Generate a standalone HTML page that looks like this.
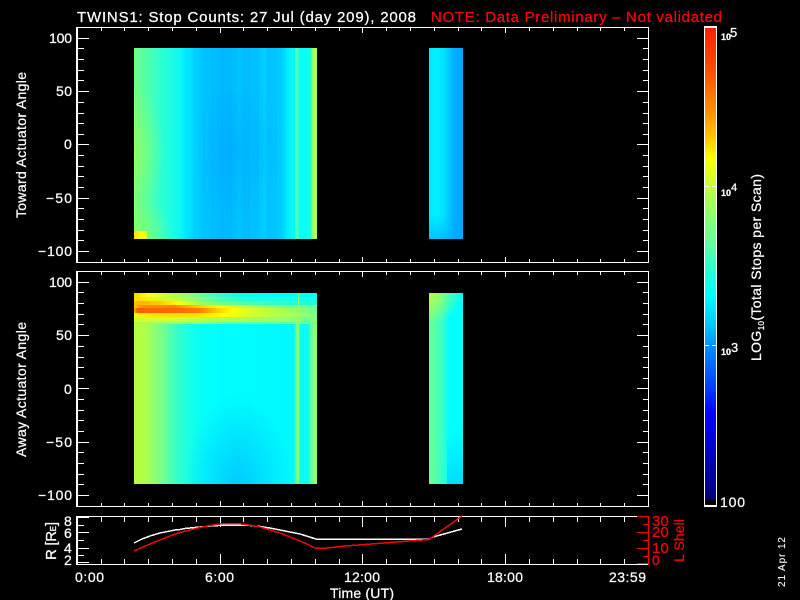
<!DOCTYPE html>
<html><head><meta charset="utf-8"><style>
html,body{margin:0;padding:0;background:#000;width:800px;height:600px;overflow:hidden}
.h{position:absolute}
svg{position:absolute;left:0;top:0}
text{font-family:"Liberation Sans",sans-serif;fill:#fff;stroke:#fff;stroke-width:.25;font-size:14px}
.r{fill:#f00;stroke:#f00}
</style></head><body>
<!-- panel 1 main -->
<div class="h" style="left:134px;top:48px;width:183px;height:191px;background:linear-gradient(90deg,#6fff88 0,#5cff9c 8px,#40ffc0 20px,#28ffd8 30px,#10f8f0 45px,#00f0ff 50px,#00d4ff 60px,#00c4ff 70px,#00b8ff 90px,#00bcff 100px,#00c8ff 106px,#00bcff 109px,#00c0ff 120px,#00c8ff 128px,#00d0ff 131px,#00c0ff 135px,#00ccff 148px,#00e8ff 152px,#00ffff 160px,#10fff0 161px,#50ffb0 162px,#50ffb0 164px,#20ffe0 165px,#00ffff 166px,#10ffe8 176px,#70ff90 178px,#b0ff50 180px,#b8ff48 183px)"></div>
<div class="h" style="left:134px;top:48px;width:50px;height:191px;background:radial-gradient(ellipse 30px 70px at 0 105px,rgba(170,255,70,.55),rgba(170,255,70,0))"></div>
<div class="h" style="left:134px;top:195px;width:50px;height:44px;background:radial-gradient(ellipse 40px 44px at 0 100%,rgba(150,255,80,.75),rgba(150,255,80,0))"></div>
<div class="h" style="left:190px;top:90px;width:90px;height:135px;background:radial-gradient(ellipse at 50% 45%,rgba(0,130,255,.2),rgba(0,130,255,0) 70%)"></div>
<div class="h" style="left:185px;top:48px;width:110px;height:191px;background:repeating-linear-gradient(90deg,rgba(0,140,255,.06) 0 2px,rgba(0,255,255,.03) 2px 5px,rgba(0,140,255,0) 5px 9px)"></div>
<div class="h" style="left:134px;top:231px;width:13px;height:8px;background:linear-gradient(90deg,#ffe000,#ffff00 60%,#e8ff20)"></div>
<!-- panel 1 second block -->
<div class="h" style="left:429px;top:48px;width:34px;height:191px;background:linear-gradient(90deg,#00e8ff 0,#00f0ff 8px,#00dcff 16px,#00c8ff 20px,#00b0ff 25px,#00a8ff 34px)"></div>
<div class="h" style="left:429px;top:215px;width:34px;height:24px;background:linear-gradient(180deg,rgba(0,170,255,0),rgba(0,170,255,.6))"></div>
<!-- panel 2 main -->
<div class="h" style="left:134px;top:293px;width:183px;height:191px;background:linear-gradient(90deg,#b0ff48 0,#b4ff44 10px,#90ff70 20px,#70ff90 30px,#40ffc0 40px,#20ffe0 52px,#08fff4 65px,#00ffff 80px,#00f8ff 160px,#50ffb0 162px,#90ff68 163px,#90ff68 164px,#40ffc0 165px,#00ffff 167px,#10f8f0 174px,#60ffa0 177px,#90ff70 180px,#90ff70 183px)"></div>
<div class="h" style="left:185px;top:395px;width:105px;height:89px;background:radial-gradient(ellipse at 50% 100%,rgba(0,170,255,.6),rgba(0,170,255,0) 72%)"></div>
<!-- bands -->
<div class="h" style="left:134px;top:293px;width:183px;height:4px;background:linear-gradient(90deg,#ffd000 0,#ffe000 4px,#ffff20 14px,#c0ff40 36px,#80ff80 60px,#40ffc0 80px,#10ffe8 105px,#00ffff 135px,#00ffff 183px)"></div>
<div class="h" style="left:134px;top:297px;width:183px;height:4px;background:linear-gradient(90deg,#ffe000 0,#ffe800 10px,#d0ff30 36px,#90ff70 62px,#50ffb0 85px,#20ffe0 115px,#10fff0 183px)"></div>
<div class="h" style="left:134px;top:301px;width:183px;height:4px;background:linear-gradient(90deg,#ffc000 0,#ffb000 6px,#ffcc00 26px,#ffff00 46px,#a0ff50 66px,#70ff80 86px,#40ffc0 126px,#20ffd0 160px,#20ffd0 183px)"></div>
<div class="h" style="left:134px;top:305px;width:183px;height:3px;background:linear-gradient(90deg,#ffd000 0,#ff9000 6px,#ff8000 40px,#ffc000 60px,#ffff00 85px,#c0ff40 110px,#80ff80 150px,#60ffa0 183px)"></div>
<div class="h" style="left:134px;top:308px;width:183px;height:5px;background:linear-gradient(90deg,#ffc000 0,#ff6000 3px,#ff6a00 50px,#ff8000 66px,#ffd000 85px,#ffff00 98px,#d0ff30 120px,#a0ff50 150px,#70ff90 183px)"></div>
<div class="h" style="left:134px;top:313px;width:183px;height:4px;background:linear-gradient(90deg,#f0ff10 0,#ffe000 20px,#ffdc00 60px,#ffff00 90px,#c8ff38 125px,#a8ff58 160px,#80ff80 183px)"></div>
<div class="h" style="left:134px;top:317px;width:183px;height:5px;background:linear-gradient(90deg,#d8ff28 0,#d0ff30 40px,#b0ff50 80px,#a0ff60 120px,#90ff70 165px,#60ffa0 172px,#90ff70 183px)"></div>
<div class="h" style="left:134px;top:322px;width:183px;height:2px;background:linear-gradient(90deg,#b0ff48 0,#90ff70 60px,#60ffa0 110px,#70ff90 183px)"></div>
<div class="h" style="left:298px;top:293px;width:1px;height:191px;background:#90ff68"></div>
<!-- panel 2 second block -->
<div class="h" style="left:429px;top:293px;width:34px;height:191px;background:linear-gradient(90deg,#70ff90 0,#50ffb0 8px,#30ffd0 15px,#14fff0 18px,#00ffff 22px,#00ffff 34px)"></div>
<div class="h" style="left:429px;top:293px;width:34px;height:30px;background:radial-gradient(ellipse 34px 30px at 0 0,rgba(190,255,60,.9),rgba(190,255,60,0))"></div>
<div class="h" style="left:447px;top:430px;width:16px;height:54px;background:linear-gradient(180deg,rgba(0,200,255,0),rgba(0,200,255,.6))"></div>
<!-- colorbar -->
<div class="h" style="left:704px;top:26px;width:11px;height:477px;border:1px solid #fff;border-width:2px 1px 2px 1px;background:linear-gradient(180deg,#ff1e00 0,#ff5000 44px,#ff9000 84px,#ffc800 110px,#ffff00 130px,#a8ff50 172px,#60ffa0 215px,#20ffd8 245px,#00ffff 268px,#00c0ff 300px,#0090ff 318px,#0040ff 358px,#0000ff 386px,#000090 460px,#000070 472px,#000 472px,#000 477px)"></div>
<svg width="800" height="600" viewBox="0 0 800 600">
<defs>
<path id="xt" d="M101 0v3M124 0v3M148 0v3M172 0v3M196 0v3M243 0v3M267 0v3M291 0v3M315 0v3M339 0v3M386 0v3M410 0v3M434 0v3M458 0v3M481 0v3M529 0v3M553 0v3M577 0v3M600 0v3M624 0v3M220 0v5M362 0v5M505 0v5" stroke="#fff" fill="none"/>
<path id="xt3" d="M101 0v5M124 0v5M148 0v5M172 0v5M196 0v5M243 0v5M267 0v5M291 0v5M315 0v5M339 0v5M386 0v5M410 0v5M434 0v5M458 0v5M481 0v5M529 0v5M553 0v5M577 0v5M600 0v5M624 0v5M220 0v10M362 0v10M505 0v10" stroke="#fff" fill="none"/>
<path id="yl" d="M78 38.5h11M78 91.5h11M78 144.5h11M78 198.5h11M78 251.5h11M78 48.5h6M78 59.5h6M78 70.5h6M78 80.5h6M78 102.5h6M78 113.5h6M78 123.5h6M78 134.5h6M78 155.5h6M78 166.5h6M78 176.5h6M78 187.5h6M78 208.5h6M78 219.5h6M78 230.5h6M78 240.5h6" stroke="#fff" fill="none"/>
<path id="yr" d="M637 38.5h11M637 91.5h11M637 144.5h11M637 198.5h11M637 251.5h11M643 48.5h5M643 59.5h5M643 70.5h5M643 80.5h5M643 102.5h5M643 113.5h5M643 123.5h5M643 134.5h5M643 155.5h5M643 166.5h5M643 176.5h5M643 187.5h5M643 208.5h5M643 219.5h5M643 230.5h5M643 240.5h5" stroke="#fff" fill="none"/>
</defs>
<g shape-rendering="crispEdges">
<!-- frames -->
<path d="M77 27.5H648.5V262.5H77Z M77 271.5H648.5V506.5H77Z M77 516.5H648.5V564.5H77Z" fill="none" stroke="#fff" stroke-width="1"/>
<rect x="76" y="27" width="2" height="236" fill="#fff"/><rect x="76" y="271" width="2" height="236" fill="#fff"/><rect x="76" y="516" width="2" height="49" fill="#fff"/>
<use href="#xt" transform="translate(0.5,28)"/>
<use href="#xt" transform="translate(0.5,262) scale(1,-1)"/>
<use href="#xt" transform="translate(0.5,272)"/>
<use href="#xt" transform="translate(0.5,506) scale(1,-1)"/>
<use href="#xt3" transform="translate(0.5,517)"/>
<use href="#xt3" transform="translate(0.5,564) scale(1,-1)"/>
<use href="#yl"/><use href="#yr"/>
<use href="#yl" transform="translate(0,244)"/><use href="#yr" transform="translate(0,244)"/>
<!-- panel 3 ticks -->
<path d="M78 517.5h11M78 532.5h11M78 548.5h11M78 562.5h11M78 525.5h6M78 540.5h6M78 555.5h6" stroke="#fff" fill="none"/>
<path d="M637 516.5h11M637 532.5h11M637 548.5h11M637 563.5h11M643 524.5h5M643 540.5h5M643 556.5h5" stroke="#f00" fill="none"/>
<rect x="648" y="516" width="1" height="49" fill="#f00"/>
<!-- colorbar dashes -->
<path d="M705 186.5h4M712 186.5h4M705 345.5h4M712 345.5h4" stroke="#fff" fill="none"/>
<!-- curves -->
<polyline points="134,543 138,541 142,539 146,537.5 150,536 155,534.5 160,533 165,532 170,531 175,530 180,529.5 185,528.5 190,528 195,527.5 200,527 205,526.5 210,526 218,525.5 225,525 240,525 250,525.5 260,526.5 270,528 280,530 290,532 300,534 308,536.5 316,539 429,539 433,537 462,529" fill="none" stroke="#fff" stroke-width="1.5"/>
<polyline points="134,551 142,547.5 150,544 160,540 170,536 180,532.5 190,530 200,527.5 210,525.5 220,524 228,523.5 237,523.5 245,524.5 252,525.5 260,527 270,530 280,533 290,537 300,541 308,544.5 315,548 327,548 345,546 365,544.5 390,542.5 429,539.5 462,516" fill="none" stroke="#f00" stroke-width="1.5"/>
</g>
<!-- title -->
<text x="77" y="22" style="font-size:15px" textLength="339" lengthAdjust="spacing">TWINS1: Stop Counts: 27 Jul (day 209), 2008</text>
<text class="r" x="431" y="22" style="font-size:15px" textLength="291" lengthAdjust="spacing">NOTE: Data Preliminary – Not validated</text>
<!-- y labels panel 1 -->
<text x="49" y="43" textLength="23">100</text>
<text x="56" y="96" textLength="16">50</text>
<text x="64" y="149">0</text>
<text x="46" y="203" textLength="26">−50</text>
<text x="38" y="256" textLength="34">−100</text>
<!-- y labels panel 2 -->
<text x="49" y="287" textLength="23">100</text>
<text x="56" y="340" textLength="16">50</text>
<text x="64" y="394">0</text>
<text x="46" y="447" textLength="26">−50</text>
<text x="38" y="500" textLength="34">−100</text>
<!-- rotated labels -->
<text transform="translate(26,218) rotate(-90)" textLength="146" lengthAdjust="spacing">Toward Actuator Angle</text>
<text transform="translate(26,457) rotate(-90)" textLength="135" lengthAdjust="spacing">Away Actuator Angle</text>
<text transform="translate(56,560) rotate(-90)" style="font-size:15px" textLength="38" lengthAdjust="spacing">R [R<tspan style="font-size:8px">E</tspan>]</text>
<!-- panel 3 y -->
<text x="64" y="526">8</text>
<text x="64" y="538">6</text>
<text x="64" y="553">4</text>
<text x="64" y="565">2</text>
<text class="r" x="652" y="526" style="font-size:15px">30</text>
<text class="r" x="652" y="537" style="font-size:15px">20</text>
<text class="r" x="652" y="553" style="font-size:15px">10</text>
<text class="r" x="652" y="565" style="font-size:14px">0</text>
<text class="r" transform="translate(684,562) rotate(-90)" textLength="43" lengthAdjust="spacing">L Shell</text>
<!-- x labels -->
<text x="75" y="582" textLength="29">0:00</text>
<text x="205" y="582" textLength="29">6:00</text>
<text x="344" y="582" textLength="36">12:00</text>
<text x="487" y="582" textLength="36">18:00</text>
<text x="609" y="582" textLength="37">23:59</text>
<text x="330" y="598" textLength="64" lengthAdjust="spacing">Time (UT)</text>
<!-- colorbar labels -->
<text x="721" y="40" style="font-size:9px;font-weight:bold" textLength="10">10</text>
<text x="730" y="37" style="font-size:13px">5</text>
<text x="721" y="196" style="font-size:9px;font-weight:bold" textLength="10">10</text>
<text x="731" y="191" style="font-size:11px">4</text>
<text x="721" y="355" style="font-size:9px;font-weight:bold" textLength="10">10</text>
<text x="731" y="352" style="font-size:13px">3</text>
<text x="720" y="507" textLength="25">100</text>
<text transform="translate(761,361) rotate(-90)" textLength="187" lengthAdjust="spacing">LOG<tspan style="font-size:8px" dy="3">10</tspan><tspan dy="-3">(Total Stops per Scan)</tspan></text>
<text transform="translate(785,587) rotate(-90)" style="font-size:10px;stroke-width:.1" textLength="50" lengthAdjust="spacing">21 Apr 12</text>
</svg>
</body></html>
